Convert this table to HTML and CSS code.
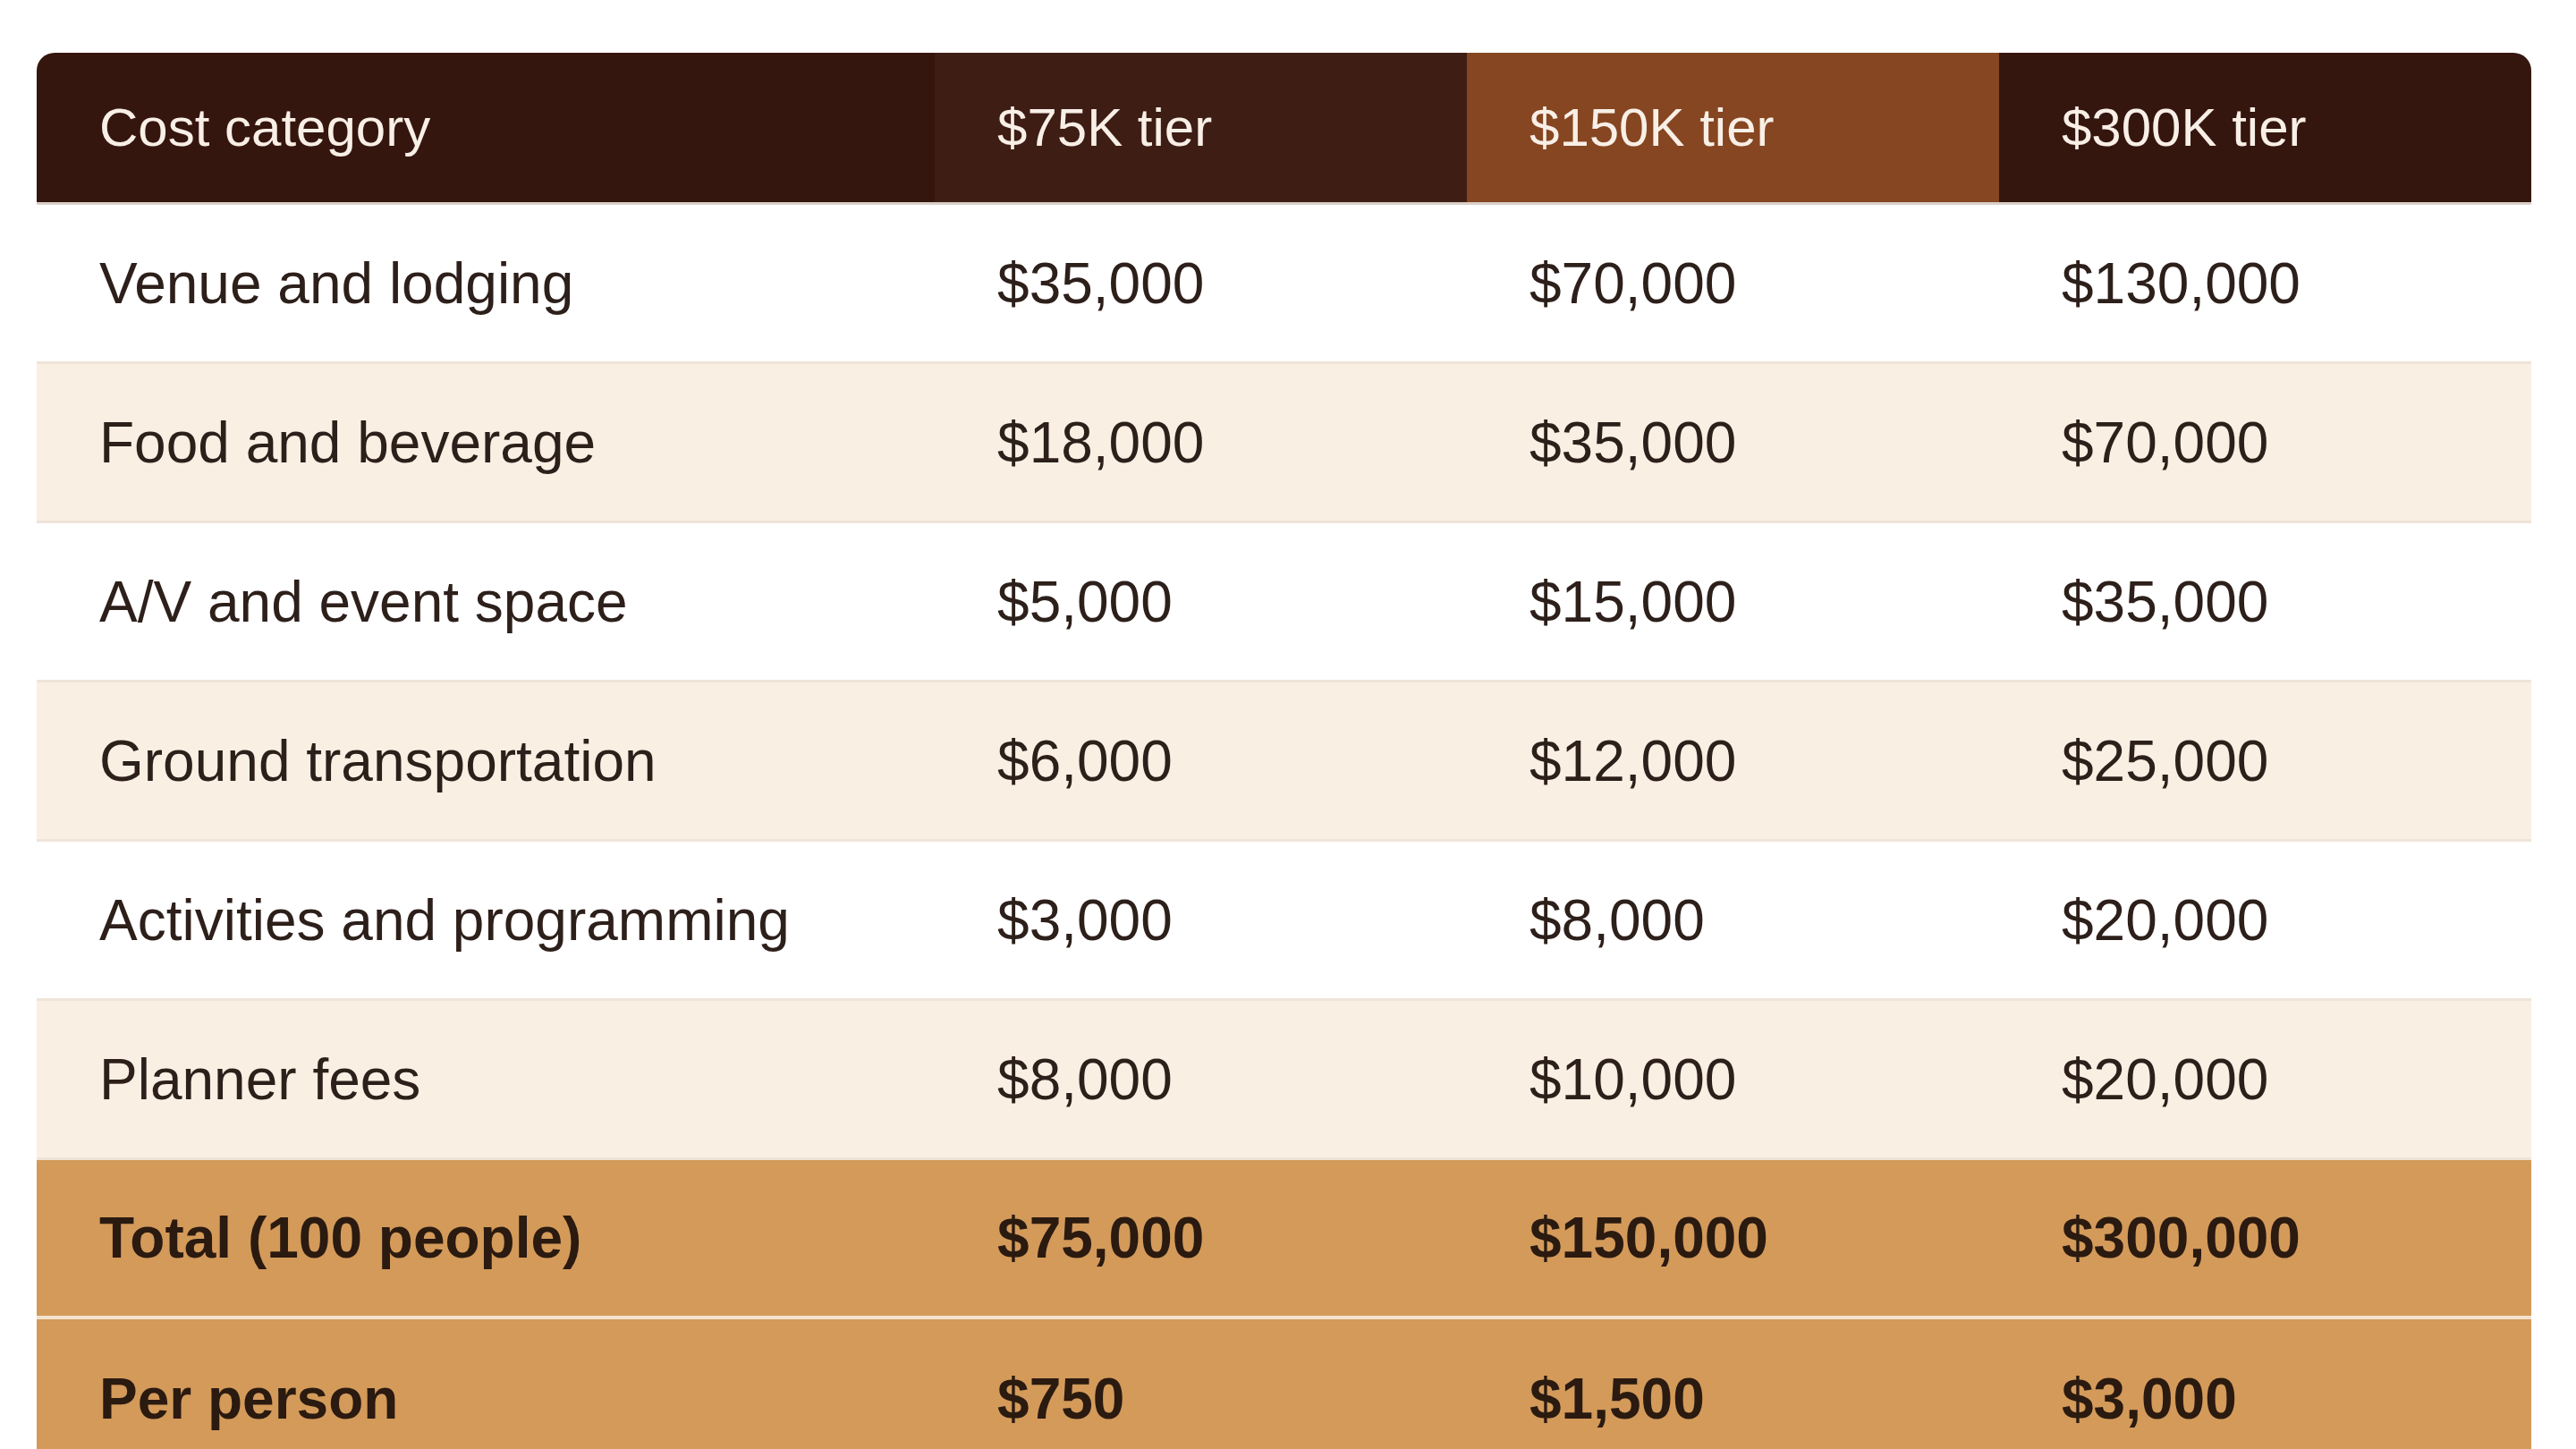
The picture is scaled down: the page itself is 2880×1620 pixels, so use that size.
FILE: index.html
```html
<!DOCTYPE html>
<html lang="en">
<head>
<meta charset="utf-8">
<title>Cost tiers</title>
<link rel="stylesheet" href="styles.css">
</head>
<body>
<main class="page">
  <table class="cost-table">
    <colgroup>
      <col class="col-cat">
      <col class="col-tier">
      <col class="col-tier">
      <col class="col-tier">
    </colgroup>
    <thead>
      <tr>
        <th class="h-cat">Cost category</th>
        <th class="h-75">$75K tier</th>
        <th class="h-150">$150K tier</th>
        <th class="h-300">$300K tier</th>
      </tr>
    </thead>
    <tbody>
      <tr><td>Venue and lodging</td><td>$35,000</td><td>$70,000</td><td>$130,000</td></tr>
      <tr><td>Food and beverage</td><td>$18,000</td><td>$35,000</td><td>$70,000</td></tr>
      <tr><td>A/V and event space</td><td>$5,000</td><td>$15,000</td><td>$35,000</td></tr>
      <tr><td>Ground transportation</td><td>$6,000</td><td>$12,000</td><td>$25,000</td></tr>
      <tr><td>Activities and programming</td><td>$3,000</td><td>$8,000</td><td>$20,000</td></tr>
      <tr><td>Planner fees</td><td>$8,000</td><td>$10,000</td><td>$20,000</td></tr>
      <tr class="total"><td>Total (100 people)</td><td>$75,000</td><td>$150,000</td><td>$300,000</td></tr>
      <tr class="total last"><td>Per person</td><td>$750</td><td>$1,500</td><td>$3,000</td></tr>
    </tbody>
  </table>
</main>
</body>
</html>
```
FILE: styles.css
```css
html, body {
  margin: 0;
  padding: 0;
  background: #ffffff;
}

body {
  font-family: "Liberation Sans", Arial, sans-serif;
  color: #2d1f1a;
}

.page {
  padding: 59px 50px 0 41px;
}

.cost-table {
  width: 100%;
  border-collapse: separate;
  border-spacing: 0;
  table-layout: fixed;
  font-size: 64px;
  line-height: 64px;
}

.col-cat {
  width: 36%;
}

.cost-table th,
.cost-table td {
  text-align: left;
  padding: 0 0 0 70px;
  white-space: nowrap;
}

.cost-table th {
  font-weight: 400;
  font-size: 60px;
  color: #f8efe6;
  height: 170px;
  box-sizing: border-box;
  border-bottom: 3px solid #d9cfc8;
  vertical-align: middle;
}

.h-cat {
  background: #35160f;
  border-top-left-radius: 20px;
}

.h-75 {
  background: #3e1d15;
}

.h-150 {
  background: #864621;
}

.h-300 {
  background: #35160f;
  border-top-right-radius: 20px;
}

.cost-table td {
  height: 178px;
  box-sizing: border-box;
  border-bottom: 3px solid #efe4d8;
  vertical-align: middle;
}

.cost-table tbody tr:nth-child(even) td {
  background: #f9efe3;
}

.cost-table tbody tr.total td {
  background: #d39a5a;
  font-weight: 700;
  color: #2a1a10;
  border-bottom: 4px solid #f3e2cf;
}

.cost-table tbody tr.total.last td {
  border-bottom: none;
}
```
